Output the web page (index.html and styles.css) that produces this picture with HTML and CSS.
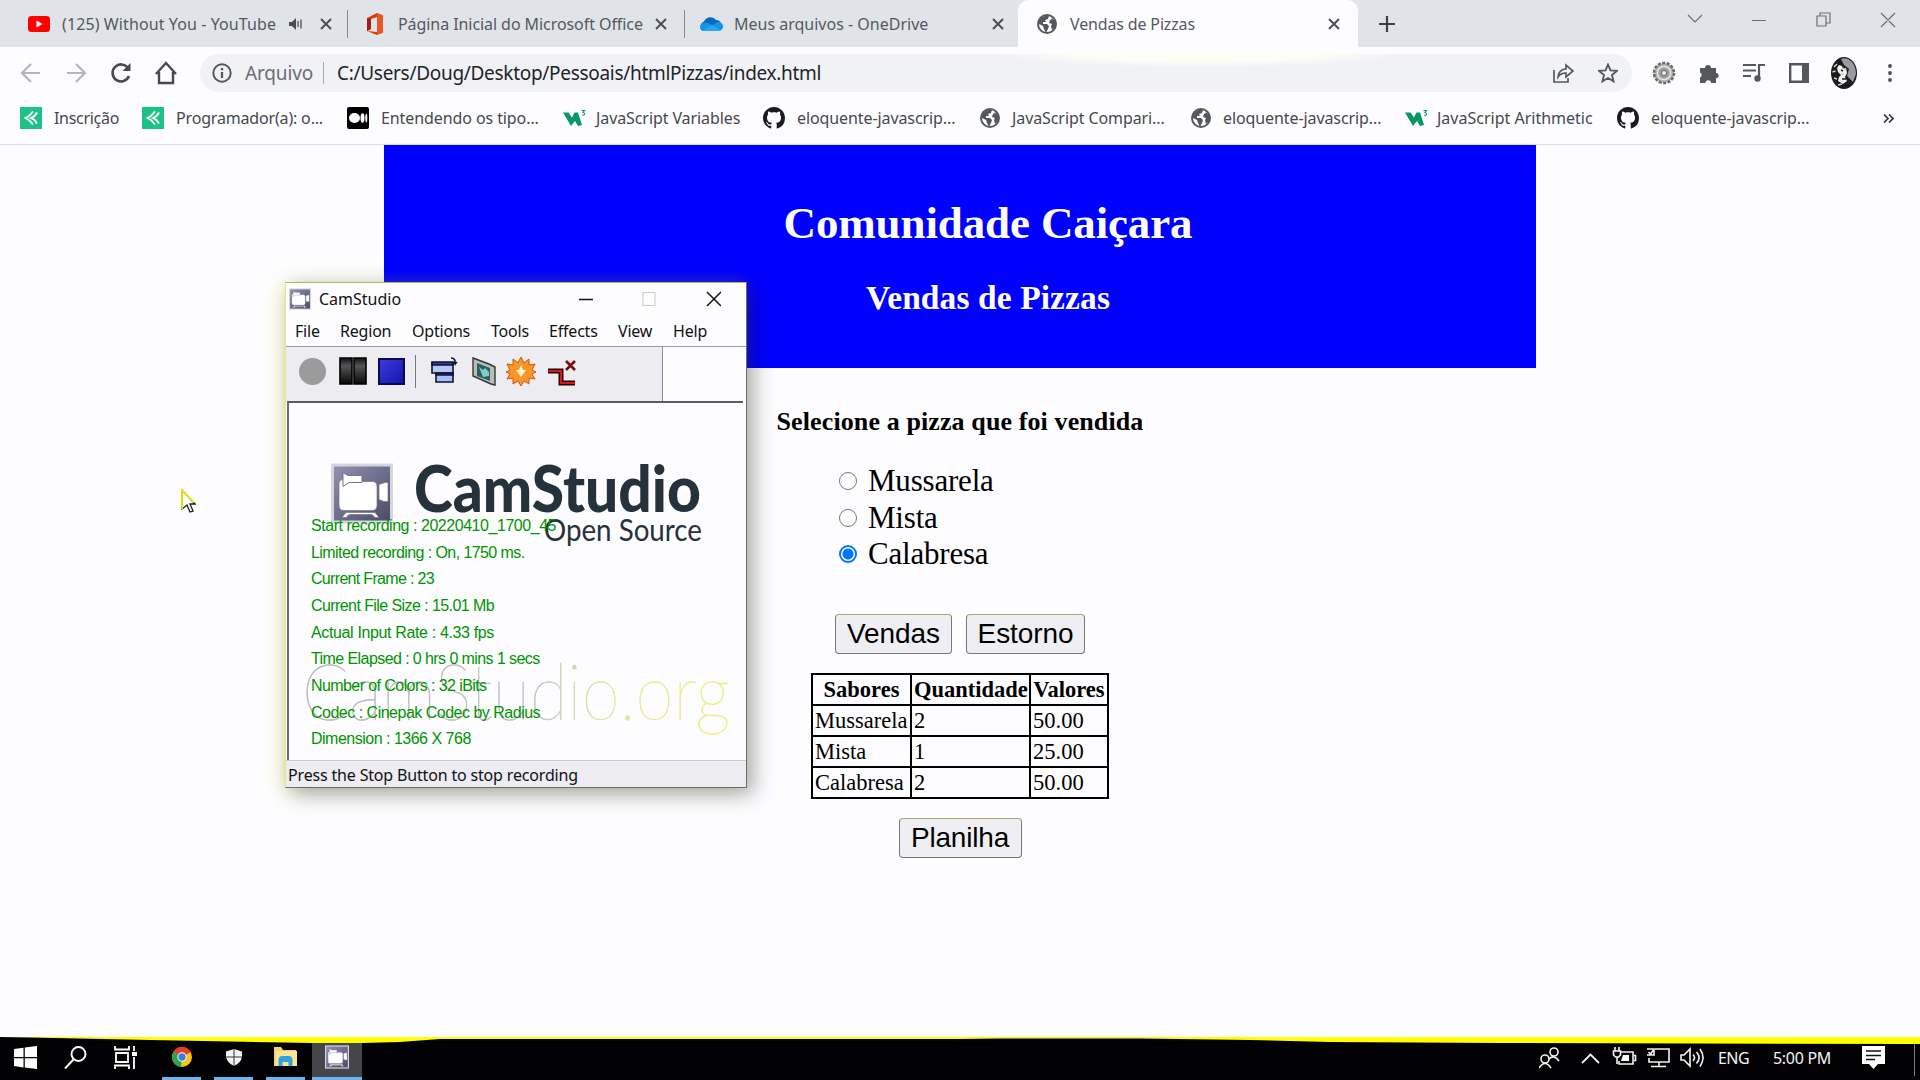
FILE: index.html
```html
<!DOCTYPE html>
<html lang="pt-BR">
<head>
<meta charset="utf-8">
<title>Vendas de Pizzas</title>
<link rel="stylesheet" href="styles.css">
</head>
<body>
<svg class="defs" width="0" height="0">
  <defs>
    <linearGradient id="lens" x1="0" y1="0" x2="1" y2="1"><stop offset="0" stop-color="#8f90b4"/><stop offset="1" stop-color="#4c4c66"/></linearGradient>
    <linearGradient id="dark" x1="0" y1="0" x2="0" y2="1"><stop offset="0" stop-color="#111"/><stop offset=".3" stop-color="#555"/><stop offset="1" stop-color="#080808"/></linearGradient>
    <linearGradient id="stopfill" x1="0" y1="0" x2="1" y2="1"><stop offset="0" stop-color="#3c3ce0"/><stop offset="1" stop-color="#1414a8"/></linearGradient>
    <linearGradient id="mark" x1="0" y1="0" x2="1" y2="0"><stop offset="0" stop-color="#b4b4bc"/><stop offset=".55" stop-color="#c2c2c0"/><stop offset=".72" stop-color="#e6e69a"/><stop offset="1" stop-color="#efef7c"/></linearGradient>
  </defs>
  <symbol id="x" viewBox="0 0 12 12"><path d="M1 1l10 10M11 1L1 11" fill="none" stroke="#4a4d50" stroke-width="1.9"/></symbol>
  <symbol id="globe" viewBox="0 0 20 20"><circle cx="10" cy="10" r="9" fill="#fff" stroke="#54585d" stroke-width="2"/><path d="M2 7C4 3 8 1 12 2l-1 3-3 1 1 2H6v2h4l2 2-1 3-2 4-2-4-1-3-4-2zM14 3l4 4v6l-3 3-1-4 1-2-3-1 1-3 2-1z" fill="#54585d"/></symbol>
  <symbol id="pulse" viewBox="0 0 22 22"><path d="M0 0h22v22H0z" fill="#1ec287"/><path d="M13 4.500Q10 9 5.500 11 10 13 13 17.500M17 5.500Q15 9.500 11 11 15 12.500 17 16.500" fill="none" stroke="#fff" stroke-width="1.800"/></symbol>
  <symbol id="w3" viewBox="0 0 23 18"><path d="M0 3.500h5.500l3.500 5 2.500-5H15l4 12.500-4 1-3-5-4 5z" fill="#059862"/><path d="M18.500 1.500h3l-1.500 2q2.500.5 1 2.500l-2 .3" fill="none" stroke="#059862" stroke-width="1.100"/></symbol>
  <symbol id="github" viewBox="0 0 16 16"><path fill="#191b22" d="M8 0C3.58 0 0 3.58 0 8c0 3.54 2.29 6.53 5.47 7.59.4.07.55-.17.55-.38 0-.19-.01-.82-.01-1.49-2.01.37-2.53-.49-2.69-.94-.09-.23-.48-.94-.82-1.13-.28-.15-.68-.52-.01-.53.63-.01 1.08.58 1.23.82.72 1.21 1.87.87 2.33.66.07-.52.28-.87.51-1.07-1.78-.2-3.64-.89-3.64-3.95 0-.87.31-1.59.82-2.15-.08-.2-.36-1.02.08-2.12 0 0 .67-.21 2.2.82.64-.18 1.32-.27 2-.27s1.36.09 2 .27c1.53-1.04 2.2-.82 2.2-.82.44 1.1.16 1.92.08 2.12.51.56.82 1.27.82 2.15 0 3.07-1.87 3.75-3.65 3.95.29.25.54.73.54 1.48 0 1.07-.01 1.93-.01 2.2 0 .21.15.46.55.38A8 8 0 0016 8c0-4.42-3.58-8-8-8z"/></symbol>
  <symbol id="cam" viewBox="0 0 62 60"><path d="M0 0h62v60H0z" fill="#d5d5dd"/><path d="M3 3h56v54H3z" fill="url(#lens)"/><path d="M8 20q0-4 4-4V9l5 3h14v6h10q5 0 5 5v19q0 5-5 5H13q-5 0-5-5zM48 21l6-2h3v19h-4l-5-2zM15 49h29l4 5h-4l-3-3H18l-3 3h-4z" fill="#fff" stroke="#77778a" stroke-width=".7"/><path d="M12 9l5 3h14v7H18l-6 4z" fill="#fff" stroke="#77778a"/></symbol>
</svg>

<header class="browser">
  <div class="tabs">
    <svg class="fav" viewBox="0 0 22 16"><rect width="22" height="16" rx="3.5" fill="#f00"/><path d="M8.500 4.500v7l6-3.500z" fill="#fff"/></svg>
    <span class="yt">(125) Without You - YouTube</span>
    <svg class="speaker" viewBox="0 0 14 14"><path d="M0 5h3l4-4v12L3 9H0z" fill="#4a4d50"/><path d="M9 4v6M12 2.500v9" stroke="#4a4d50" stroke-width="1.300"/></svg>
    <svg class="close"><use href="#x"/></svg>
    <i class="sep"></i>
    <svg class="office" viewBox="0 0 18 22"><path d="M11 0l6 2.500v17L11 22 1 18l10 1V4L5 6v10l-4 2V5z" fill="#d83b01"/><path d="M11 0l6 2.500v17L11 22z" fill="#e8562a"/><path d="M1 5l4 1v10l-4 2z" fill="#a81c18"/></svg>
    <span class="of">Página Inicial do Microsoft Office</span>
    <svg class="close"><use href="#x"/></svg>
    <i class="sep"></i>
    <svg class="cloud" viewBox="0 0 23 15"><path d="M5 15a5 5 0 01-1-9.500A7 7 0 0116 4a6 6 0 013 11z" fill="#0a66c2"/><path d="M4 15a4 4 0 010-8c4-1 6 1 8 2l6-3a4.500 4.500 0 011 9z" fill="#1793e6"/><path d="M3 14l9-5 9 5-2 1H5z" fill="#28a8ea"/></svg>
    <span>Meus arquivos - OneDrive</span>
    <svg class="close"><use href="#x"/></svg>
    <div class="tab-active">
      <svg class="globe"><use href="#globe"/></svg>
      <span class="vp">Vendas de Pizzas</span>
      <svg class="close"><use href="#x"/></svg>
    </div>
    <svg class="plus" viewBox="0 0 18 18"><path d="M9 1v16M1 9h16" stroke="#3d4043" stroke-width="2.200"/></svg>
    <svg class="winctl" viewBox="0 0 210 20"><g fill="none" stroke="#6b6e72" stroke-width="1.200"><path d="M1 5l7 7 7-7M65 10.500h14M130 6h9v10h-9zM133 6V3h10v10h-4M194 3l14 14M208 3l-14 14"/></g></svg>
  </div>

  <div class="toolbar">
    <svg class="nav" viewBox="0 0 160 26"><g fill="none" stroke-width="2.200"><path d="M20 13H3M11 4l-9 9 9 9M47 13h17M56 4l9 9-9 9" stroke="#b4b6b9"/><path d="M108 8a8.500 8.500 0 101 8" stroke="#46494d" stroke-width="2.600"/><path d="M110.500 3v8h-8z" fill="#46494d" stroke="none"/><path d="M136 14l10-11 10 11M139 12v11h14V12" stroke="#46494d" stroke-width="2.400"/></g></svg>
    <div class="omnibox">
      <svg class="info" viewBox="0 0 20 20"><circle cx="10" cy="10" r="8.700" fill="none" stroke="#54585d" stroke-width="2"/><path d="M10 9v6M10 5v2.300" stroke="#54585d" stroke-width="2.300"/></svg>
      <span class="scheme">Arquivo</span>
      <i class="bar"></i>
      <span class="url">C:/Users/Doug/Desktop/Pessoais/htmlPizzas/index.html</span>
      <svg class="share" viewBox="0 0 22 20"><path d="M2 7v12h14v-4M6 14c0-5 4-8 8-8V2l7 6-7 6v-4c-4 0-6 1-8 4z" fill="none" stroke="#54585d" stroke-width="1.700"/></svg>
      <svg class="star" viewBox="0 0 20 20"><path d="M10 1.500l2.500 5.900 6.400.5-4.900 4.200 1.500 6.200L10 15l-5.500 3.300L6 12.100 1.100 7.900l6.400-.5z" fill="none" stroke="#54585d" stroke-width="1.900"/></svg>
    </div>
    <svg class="gear" viewBox="0 0 24 24"><circle cx="12" cy="12" r="10" fill="#b5b5b5" stroke="#6a6a6a" stroke-width="2.600" stroke-dasharray="3 1.500"/><circle cx="12" cy="12" r="6.500" fill="#9c9c9c" stroke="#e4e4e4" stroke-width="1.500"/><circle cx="12" cy="12" r="2.500" fill="#eee" stroke="#666"/></svg>
    <svg class="puzzle" viewBox="0 0 20 20"><path d="M1 5h5a3 3 0 116 0h5v5a2.600 2.600 0 110 5.200V20h-5a2.600 2.600 0 10-5.500 0H1v-5.500a2.700 2.700 0 000-5z" fill="#54585d"/></svg>
    <svg class="music" viewBox="0 0 22 20"><path d="M0 2h13M0 7.500h13M0 13h8M16 15V2h6" fill="none" stroke="#54585d" stroke-width="2.200"/><circle cx="14.500" cy="15.500" r="3.200" fill="#54585d"/></svg>
    <svg class="side" viewBox="0 0 20 20"><path d="M1.200 1.200h17.600v17.600H1.200z" fill="none" stroke="#54585d" stroke-width="2.400"/><path d="M13 1h7v18h-7z" fill="#54585d"/></svg>
    <svg class="avatar" viewBox="0 0 26 32"><ellipse cx="13" cy="16" rx="13" ry="16" fill="#1b1b1d"/><path d="M10 2c8-3 15 5 15 15l-3 8-6-6 2-7-5-4z" fill="#9a9aa0"/><path d="M8 8l3 1 1 3 3-1 1 5-2 4 2 4-4 3-5-3 1-4 2-2-3-3-1-4z" fill="#f1f1f1"/><path d="M3 10l3-3M1.500 15l3-1M3 21l3 1M7 28l4-1M12 11l3 2M10 17h3" stroke="#d0d0d0" stroke-width="1.500"/><path d="M10 13l2 1M11 22h4" stroke="#222" stroke-width="1.500"/></svg>
    <svg class="dots" viewBox="0 0 4 20"><g fill="#4a4d50"><circle cx="2" cy="3" r="1.900"/><circle cx="2" cy="10" r="1.900"/><circle cx="2" cy="17" r="1.900"/></g></svg>
  </div>

  <nav class="bookmarks">
    <svg class="bm"><use href="#pulse"/></svg><span class="ins">Inscrição</span>
    <svg class="bm"><use href="#pulse"/></svg><span class="prog">Programador(a): o...</span>
    <svg class="bm" viewBox="0 0 22 22"><rect width="22" height="22" rx="2" fill="#000"/><ellipse cx="7.500" cy="11" rx="5.500" ry="5" fill="#fff"/><ellipse cx="15.500" cy="11" rx="2" ry="4.700" fill="#fff"/><ellipse cx="19.300" cy="11" rx="1" ry="4.200" fill="#fff"/></svg><span>Entendendo os tipo...</span>
    <svg class="w3"><use href="#w3"/></svg><span>JavaScript Variables</span>
    <svg class="bm"><use href="#github"/></svg><span>eloquente-javascrip...</span>
    <svg class="globe"><use href="#globe"/></svg><span>JavaScript Compari...</span>
    <svg class="globe"><use href="#globe"/></svg><span>eloquente-javascrip...</span>
    <svg class="w3"><use href="#w3"/></svg><span class="ari">JavaScript Arithmetic</span>
    <svg class="bm"><use href="#github"/></svg><span>eloquente-javascrip...</span>
    <svg class="more" viewBox="0 0 11 9"><path d="M1 .5l4 4-4 4M6 .5l4 4-4 4" fill="none" stroke="#33363a" stroke-width="1.700"/></svg>
  </nav>
</header>

<main class="page">
  <section class="banner">
    <h1>Comunidade Caiçara</h1>
    <h2>Vendas de Pizzas</h2>
  </section>
  <h3>Selecione a pizza que foi vendida</h3>
  <div class="choices">
    <label><i class="radio"></i><span>Mussarela</span></label>
    <label><i class="radio"></i><span>Mista</span></label>
    <label><i class="radio on"></i><span>Calabresa</span></label>
  </div>
  <div class="actions"><button class="wv">Vendas</button><button class="we">Estorno</button></div>
  <table>
    <tr><th>Sabores</th><th>Quantidade</th><th>Valores</th></tr>
    <tr><td>Mussarela</td><td>2</td><td>50.00</td></tr>
    <tr><td>Mista</td><td>1</td><td>25.00</td></tr>
    <tr><td>Calabresa</td><td>2</td><td>50.00</td></tr>
  </table>
  <button class="sheet">Planilha</button>
</main>

<div class="window">
  <div class="titlebar">
    <svg class="appicon"><use href="#cam"/></svg>
    <span>CamStudio</span>
    <svg class="caption" viewBox="0 0 142 16"><path d="M0 8.500h14M128 1l14 14M142 1l-14 14" stroke="#111" stroke-width="1.500" fill="none"/><path d="M64 1.500h12v13H64z" fill="none" stroke="#c9c9b8"/></svg>
  </div>
  <div class="menubar"><span>File</span><span>Region</span><span>Options</span><span>Tools</span><span>Effects</span><span>View</span><span>Help</span></div>
  <div class="tools">
    <svg viewBox="0 0 376 54" width="376" height="54">
      <circle cx="26.500" cy="24.500" r="13.500" fill="#9b9b9b"/>
      <path d="M53 12h12v26H53zM67 12h12v26H67z" transform="translate(1 -1)" fill="url(#dark)" stroke="#000" stroke-width="1.600"/>
      <path d="M93 12h25v25H93z" fill="url(#stopfill)" stroke="#0a0a50" stroke-width="2"/>
      <path d="M129.500 8v33" stroke="#777"/>
      <g stroke="#111136" stroke-width="1.600"><path d="M146 16h21v10h-21z" fill="#b5c8f6"/><path d="M146 15h21v3h-21z" fill="#2d3f9d"/><path d="M150 27h17v8h-17z" fill="#a5c0f4"/><path d="M150 26h17v2h-17z" fill="#2d3f9d"/><path d="M165 11q5 0 4 6l-2-2m2 2l2-2" fill="none"/></g>
      <path d="M187 11l16 6 6 3v18l-4-1-18-8z" fill="#b9bdb5" stroke="#33382f" stroke-width="1.400"/><path d="M191 16l13 5v13l-13-5z" fill="#28606a"/><path d="M193 20l4 3 2-2 4 4v4l-6 1z" fill="#7fd0bd"/>
      <path d="M235 10l3 6 5-4 0 6 6-1-3 6 4 2-4 2 3 5-6-1 0 6-5-3-3 5-3-5-5 3 0-6-6 1 3-5-4-2 4-2-3-6 6 1 0-6 5 4z" fill="#fb962a" stroke="#c85c08"/><path d="M235 18l2 5h3l-5 7-5-7h3z" fill="#fff5d0"/>
      <path d="M262 24h13v12h14" fill="none" stroke="#2a0000" stroke-width="5"/><path d="M262 24h13v12h14" fill="none" stroke="#d81818" stroke-width="2"/><path d="M280 14l9 9M289 14l-9 9" stroke="#7c0b0b" stroke-width="2.600"/>
    </svg>
    <div class="blank"></div>
  </div>
  <div class="client">
    <svg class="art" viewBox="0 0 458 356" width="458" height="356">
      <use href="#cam" x="42" y="60" width="62" height="61"/>
      <text class="brand" x="125" y="109" textLength="287" lengthAdjust="spacingAndGlyphs">CamStudio</text>
      <text class="sub" x="255" y="138" textLength="158" lengthAdjust="spacingAndGlyphs">Open Source</text>
      <text class="org" x="13" y="317" textLength="428" lengthAdjust="spacingAndGlyphs">CamStudio.org</text>
    </svg>
    <div class="stats"><p>Start recording : 20220410_1700_45</p><p>Limited recording : On, 1750 ms.</p><p>Current Frame : 23</p><p>Current File Size : 15.01 Mb</p><p>Actual Input Rate : 4.33 fps</p><p>Time Elapsed : 0 hrs 0 mins 1 secs</p><p>Number of Colors : 32 iBits</p><p>Codec : Cinepak Codec by Radius</p><p>Dimension : 1366 X 768</p></div>
  </div>
  <div class="status">Press the Stop Button to stop recording</div>
</div>

<svg class="cursor" viewBox="0 0 15 25"><path d="M1 1l13 14H9l3 7-3 1-3-7-5 4z" fill="#fff" stroke="#1c1c20" stroke-width="1.300"/><path d="M1 20V1l12 12.500" fill="none" stroke="#f6f600" stroke-width="1.600"/></svg>

<footer class="taskbar">
  <svg class="tk" viewBox="0 0 23 23"><path d="M0 3l9.500-1.300v9.300H0zM10.800 1.500L23 0v11H10.800zM0 12.200h9.500v9.300L0 20zM10.800 12.200H23V23l-12.200-1.600z" fill="#fff"/></svg>
  <svg class="tk" viewBox="0 0 23 23"><circle cx="14.500" cy="8" r="7" fill="none" stroke="#fff" stroke-width="1.900"/><path d="M9.500 13.500L1 22.500" stroke="#fff" stroke-width="2"/></svg>
  <svg class="tk" viewBox="0 0 23 23"><path d="M1 0v3.500h14V0M1 23v-3.500h14V23M2 7h12v9H2zM20 0v5M20 11v12" fill="none" stroke="#fff" stroke-width="1.800"/><path d="M18 6h5v4h-5z" fill="#fff"/></svg>
  <span class="app"><svg class="chrome" viewBox="0 0 20 20"><circle cx="10" cy="10" r="10" fill="#fbc116"/><path d="M10 10L1.300 5A10 10 0 0118.700 5z" fill="#e33b2e"/><path d="M10 10L1.300 5A10 10 0 009 20z" fill="#2da44e"/><circle cx="10" cy="10" r="4.700" fill="#fff"/><circle cx="10" cy="10" r="3.700" fill="#3b7de0"/></svg></span>
  <span class="app"><svg class="shield" viewBox="0 0 16 17"><path d="M8 0l8 2.500v5Q15 14 8 17 1 14 0 7.500v-5z" fill="#f3f3f3"/><path d="M8 0v17M0 8h16" stroke="#333" stroke-width="1"/></svg></span>
  <span class="app"><svg class="folder" viewBox="0 0 23 20"><path d="M0 0h7l2 3h13v16H0z" fill="#f5d36b"/><path d="M2 4h21v15H2z" fill="#fbe394"/><path d="M4.500 19v-6q0-4 4-4h6q4 0 4 4v6h-4v-4h-6v4z" fill="#2ea3e0"/></svg></span>
  <span class="app current"><svg class="tcam"><use href="#cam"/></svg></span>
  <div class="tray">
    <svg viewBox="0 0 182 24" width="182" height="24"><g fill="none" stroke="#f4f4f4" stroke-width="1.600"><circle cx="15" cy="6" r="4"/><path d="M10 13q5-5 10 2"/><circle cx="6" cy="13" r="4"/><path d="M0 22q6-9 12 0"/><path d="M43 17l8.500-8.500L60 17" stroke-width="1.800"/><path d="M82 6h12v12H80v-3M95 9.500h1.500v5H95M76 1v4M80 1v4M74.500 5h7v4l-2 2h-3l-2-2zM78 11v7"/><path d="M116 3h14v13h-20v-4M120 16v4M112 20.500h15M108 3h7v6h-7M109.500 6l2 2 3-4"/><path d="M142 9h3l6-6v17l-6-6h-3zM154 8.500q3 3 0 6.500M157.500 6q5 5.500 0 11.500M161 3q6 8.500 0 17.500"/></g><path d="M84 9h6v6h-8z" fill="#fff"/></svg>
    <span class="eng">ENG</span>
    <span class="clock">5:00 PM</span>
    <svg class="note" viewBox="0 0 23 23"><path d="M0 0h23v18h-7l-4.500 5L7 18H0z" fill="#fff"/><path d="M4 5h15M4 9.500h15M4 13.500h9" stroke="#111" stroke-width="1.400"/></svg>
    <i class="peek"></i>
  </div>
  <svg class="edge" viewBox="0 0 1920 8" width="1920" height="8"><path d="M0 0H1920V7L1500 6 1330 5 1250 3 1140 1.500H1000L960 2H440L400 5 362 6H312L150 3 30 .5z" fill="#ff0"/></svg>
</footer>
</body>
</html>
```
FILE: styles.css
```css
* { box-sizing: border-box; }
body { margin: 0; width: 1920px; height: 1080px; overflow: hidden; background: #fdfdff; display: flex; flex-direction: column; position: relative; font-family: "Noto Sans", "Open Sans", sans-serif; }
svg { display: block; flex: none; }
.defs { position: absolute; }
span { white-space: nowrap; }
.browser { height: 145px; flex: none; border-bottom: 1px solid #dedfe4; }

.tabs { height: 47px; background: #e0e4e9; display: grid; grid-template-columns: 28px 34px 227px 31px 27px 19px 32px 257px 29px 16px 34px 258px 26px 340px 329px 210px; align-items: center; color: #55595e; font-size: 16px; }
.tabs > .fav { width: 22px; height: 16px; grid-column: 2; }
.yt { letter-spacing: .1px; }
.of { letter-spacing: -.07px; }
.vp { letter-spacing: -.15px; }
.speaker { width: 14px; height: 14px; }
.close { width: 12px; height: 12px; }
.sep { width: 1px; height: 28px; background: #85898e; }
.office { width: 18px; height: 22px; }
.cloud { width: 23px; height: 15px; }
.tab-active { height: 47px; background: #fdfdff; border-radius: 11px 11px 0 0; display: grid; grid-template-columns: 33px 258px 12px; align-items: center; padding-left: 19px; }
.globe { width: 20px; height: 20px; }
.plus { width: 18px; height: 18px; margin-left: 20px; }
.winctl { width: 210px; height: 20px; margin-top: -8px; }

.toolbar { height: 52px; display: flex; align-items: center; padding-left: 20px; }
.nav { width: 160px; height: 26px; }
.omnibox { width: 1432px; height: 38px; border-radius: 19px; background: radial-gradient(ellipse 200px 13px at 1000px 0, #fdfdf4 60%, transparent) #f1f2f6; margin-left: 20px; display: grid; grid-template-columns: 33px 78px 14px 1215px 46px 20px; align-items: center; padding-left: 12px; font-size: 19px; }
.info { width: 20px; height: 20px; }
.scheme { color: #6a6d72; letter-spacing: -.16px; }
.bar { width: 1px; height: 22px; background: #a8abb0; }
.url { color: #222428; letter-spacing: -.3px; }
.share { width: 22px; height: 20px; }
.star { width: 20px; height: 20px; }
.gear { width: 24px; height: 24px; margin-left: 20px; }
.puzzle { width: 20px; height: 20px; margin-left: 23px; }
.music { width: 22px; height: 20px; margin-left: 24px; }
.side { width: 20px; height: 20px; margin-left: 24px; }
.avatar { width: 26px; height: 32px; margin-left: 22px; }
.dots { width: 4px; height: 20px; margin-left: 31px; }

.bookmarks { height: 38px; display: grid; grid-template-columns: 34px 88px 34px 171px 34px 182px 33px 167px 34px 183px 32px 179px 32px 182px 32px 180px 34px 232px 11px; align-items: center; padding-left: 20px; font-size: 16px; letter-spacing: -.09px; color: #45484e; }
.bookmarks .ins { letter-spacing: -.3px; }
.bookmarks .prog { letter-spacing: -.17px; }
.bookmarks .ari { letter-spacing: 0; }
.bm { width: 22px; height: 22px; }
.w3 { width: 23px; height: 18px; }
.more { width: 11px; height: 9px; }

.page { flex: 1; display: flex; flex-direction: column; align-items: center; font-family: "Liberation Serif", serif; color: #000; }
.banner { width: 1152px; height: 223px; background: #00f; color: #fdfdff; padding: 52px 0 0 56px; text-align: center; }
h1, h2, h3 { margin: 0; }
h1 { font-size: 45px; line-height: 52px; letter-spacing: -.13px; }
h2 { font-size: 33.500px; line-height: 38px; margin-top: 30px; letter-spacing: .09px; }
h3 { font-size: 26px; line-height: 30px; margin-top: 39px; letter-spacing: .11px; }
.choices { width: 240px; margin-top: 26px; }
.choices label { display: flex; align-items: center; gap: 10px; height: 36.500px; font-size: 31px; letter-spacing: -.2px; }
.radio { width: 18px; height: 18px; margin-left: -1px; margin-right: 1px; border: 1.500px solid #77777c; border-radius: 50%; background: #fff; }
.radio.on { border: 2px solid #0075ff; background: radial-gradient(circle, #0075ff 5px, #fff 6px); }
.actions { display: flex; gap: 14px; margin-top: 41px; }
button { height: 40px; padding: 0; border: 1.500px solid #77777c; border-top-color: #a9a968; border-radius: 4px; background: #efeff3; font: 28px "Liberation Sans", sans-serif; letter-spacing: -.1px; color: #000; }
.wv { width: 117px; }
.we { width: 119px; }
.sheet { width: 123px; margin-top: 19px; letter-spacing: -.2px; }
table { border-collapse: collapse; width: 298px; height: 126px; margin-top: 19px; table-layout: fixed; font-size: 22.500px; line-height: 26px; }
th, td { border: 2px solid #000; padding: 1px 2px 0; text-align: left; }
th { text-align: center; }
th:nth-child(1) { width: 99px; }
th:nth-child(2) { width: 119px; }

.window { position: absolute; left: 285px; top: 282px; width: 462px; height: 506px; background: #fdfdff; border: 1px solid #6b6b70; border-left-color: #e8e87a; border-top-color: #b5b560; box-shadow: 6px 6px 20px rgba(0, 0, 20, .34), -4px 2px 16px rgba(240, 240, 90, .3); display: flex; flex-direction: column; color: #111; }
.titlebar { height: 33px; display: grid; grid-template-columns: 29px 260px 142px; align-items: center; padding: 0 0 2px 4px; font-size: 16px; }
.appicon { width: 22px; height: 22px; margin-left: -1px; }
.caption { width: 142px; height: 16px; }
.menubar { height: 31px; display: grid; grid-template-columns: 45px 72px 79px 58px 69px 55px 40px; align-items: center; padding-left: 9px; border-bottom: 1px solid #9c9ca0; font-size: 16px; letter-spacing: -.2px; }
.tools { height: 54px; background: #ececf1; display: flex; }
.blank { width: 84px; border-left: 1px solid #8a8a8e; background: #fdfdff; }
.client { flex: 1; margin: 0 3px 0 1px; border-left: 2px solid #6b6b70; border-top: 2px solid #5c5c60; position: relative; }
.art { position: absolute; left: 0; top: 0; }
.brand { font: 900 64px Lato, sans-serif; fill: #26323b; }
.sub { font: 400 31px Lato, sans-serif; fill: #26323b; }
.org { font: 100 79px Lato, sans-serif; fill: url(#mark); stroke: url(#mark); stroke-width: .5px; }
.stats { position: relative; padding: 110px 0 0 22px; font: 16px/26.650px "Liberation Sans", sans-serif; letter-spacing: -.58px; color: #009400; white-space: nowrap; }
.stats p { margin: 0; }
.stats p:nth-child(1) { letter-spacing: -.46px; }
.stats p:nth-child(3) { letter-spacing: -.68px; }
.stats p:nth-child(5) { letter-spacing: -.36px; }
.stats p:nth-child(n+8) { letter-spacing: -.5px; }
.status { height: 27px; background: #ececf1; border-top: 1px solid #c9c9cf; padding-left: 2px; font-size: 16px; line-height: 28px; letter-spacing: -.17px; color: #111; }
.cursor { position: absolute; left: 181px; top: 489px; width: 15px; height: 25px; }

.taskbar { height: 43px; flex: none; background: #020204; display: flex; align-items: center; position: relative; padding-left: 14px; color: #f4f4f4; }
.tk { width: 23px; height: 23px; margin-right: 27px; margin-top: -2px; }
.app { width: 39px; height: 43px; margin-right: 13px; border-bottom: 3px solid #6eb4f2; display: flex; align-items: center; justify-content: center; }
.tk + .app { margin-left: -2px; }
.current { width: 50px; margin-left: -6px; background: #45454b; }
.chrome { width: 20px; height: 20px; }
.shield { width: 16px; height: 17px; }
.folder { width: 23px; height: 20px; }
.tcam { width: 24px; height: 24px; }
.tray { margin: -2px 0 0 auto; display: grid; grid-template-columns: 179px 55px 89px 52px 6px; align-items: center; font-size: 16px; }
.eng { letter-spacing: -.57px; }
.clock { letter-spacing: -.3px; }
.note { width: 23px; height: 23px; }
.peek { width: 1px; height: 36px; background: #7d7d80; }
.edge { position: absolute; left: 0; top: 0; }
```
